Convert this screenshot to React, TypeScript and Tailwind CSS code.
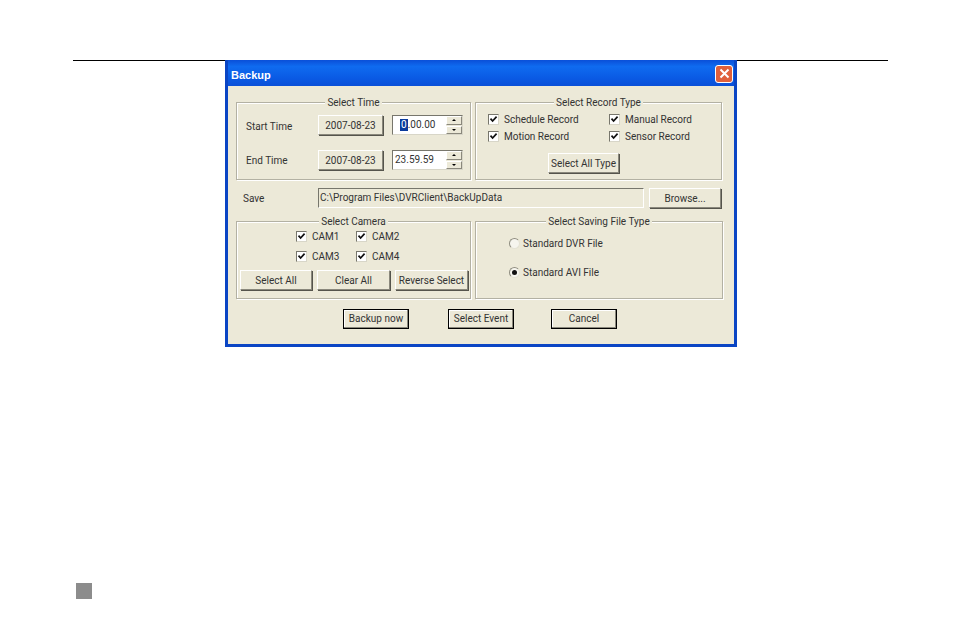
import type { ReactNode } from 'react';

const raised = 'border border-t-white border-l-white border-r-[#8a887c] border-b-[#8a887c] shadow-[1px_1px_0_#55544c] bg-[#ece9d8]';

function Btn({ children, className }: { children: ReactNode; className: string }) {
  return <div className={`flex items-center justify-center h-5 pt-px whitespace-nowrap ${raised} ${className}`}>{children}</div>;
}

function DefaultBtn({ children, className }: { children: ReactNode; className?: string }) {
  return (
    <div className={`flex items-center justify-center h-5 w-[66px] bg-[#ece9d8] border border-black shadow-[inset_-1px_-1px_0_#8a887c,inset_1px_1px_0_#fff] ${className ?? ''}`}>
      {children}
    </div>
  );
}

function Group({ title, className, children }: { title: string; className: string; children: ReactNode }) {
  return (
    <div className={`relative border border-[#b3b1a3] shadow-[inset_1px_1px_0_#fff,1px_1px_0_#fff] ${className}`}>
      <span className="absolute -top-[6px] left-0 right-0 flex justify-center leading-3">
        <span className="bg-[#ece9d8] px-0.5">{title}</span>
      </span>
      {children}
    </div>
  );
}

function Check({ label }: { label: string }) {
  return (
    <div className="flex items-center gap-[5px]">
      <div className="flex items-center justify-center w-[11px] h-[11px] bg-white border border-t-[#77766c] border-l-[#77766c] border-r-[#d8d6c8] border-b-[#d8d6c8]">
        <svg viewBox="0 0 9 9" className="w-[9px] h-[9px]">
          <path d="M1.5 3.6 L3.6 6 L7.6 1.6" fill="none" stroke="#111" strokeWidth="1.7" />
        </svg>
      </div>
      <span className="pt-px">{label}</span>
    </div>
  );
}

function Radio({ label, on }: { label: string; on?: boolean }) {
  return (
    <div className="flex items-center gap-[3px]">
      <div className="flex items-center justify-center w-[11px] h-[11px] rounded-full bg-[#f6f5ee] border border-t-[#8f8d80] border-l-[#8f8d80] border-r-[#e4e2d4] border-b-[#e4e2d4]">
        {on && <div className="w-[5px] h-[5px] rounded-full bg-[#111]" />}
      </div>
      <span className="pt-px">{label}</span>
    </div>
  );
}

function TimeBox({ children, className }: { children: ReactNode; className: string }) {
  return (
    <div className="flex items-center w-[71px] h-5 bg-white border border-t-[#77766c] border-l-[#77766c] border-r-[#d8d6c8] border-b-[#d8d6c8]">
      <div className={`flex-1 flex items-center ${className}`}>{children}</div>
      <div className="flex flex-col bg-[#ece9d8] w-4 h-[18px] gap-px">
        <div className={`flex-1 flex items-center justify-center ${raised} shadow-none`}>
          <div className="border-x-[2px] border-b-[2px] border-x-transparent border-b-black" />
        </div>
        <div className={`flex-1 flex items-center justify-center ${raised} shadow-none`}>
          <div className="border-x-[2px] border-t-[2px] border-x-transparent border-t-black" />
        </div>
      </div>
    </div>
  );
}

export default function App() {
  return (
    <div className="w-[954px] h-[637px] bg-white overflow-hidden text-[10px] leading-3 text-[#333] font-['Roboto',Arial,sans-serif]">
      <div className="ml-[73px] mt-[60px] w-[815px] border-t border-black">
        <div className="ml-[152px] -mt-px w-[512px] h-[287px] flex flex-col bg-[#0a45c4] px-[3px] pb-[3px] relative">
          <div className="h-[26px] flex items-center justify-between pl-[3px] bg-[linear-gradient(to_bottom,#0a4fd8,#0f6bf0_25%,#0a5ae4_70%,#0a50d8)]">
            <span className="text-white font-bold text-[11px] mt-[3px] font-['Liberation_Sans',sans-serif]">Backup</span>
            <div className="w-[18px] h-[18px] mr-px mt-[1px] rounded-[3px] border border-white bg-[#e0603c] flex items-center justify-center">
              <svg viewBox="0 0 11 11" className="w-[11px] h-[11px]">
                <path d="M1.5 1.5 L9.5 9.5 M9.5 1.5 L1.5 9.5" stroke="#fff" strokeWidth="2" />
              </svg>
            </div>
          </div>

          <div className="flex-1 bg-[#ece9d8] pl-[8px] pt-[16px] flex flex-col">
            <div className="flex gap-1 h-[78px]">
              <Group title="Select Time" className="w-[235px] flex flex-col gap-[15px] pt-3 pl-[9px]">
                <div className="flex items-center">
                  <span className="w-[72px] mt-[3px]">Start Time</span>
                  <Btn className="w-[65px] mr-[9px]">2007-08-23</Btn>
                  <TimeBox className="pl-[7px]">
                    <span className="bg-[#0a3a9c] text-white h-3 px-px">0</span>.00.00
                  </TimeBox>
                </div>
                <div className="flex items-center">
                  <span className="w-[72px] mt-px">End Time</span>
                  <Btn className="w-[65px] mr-[9px]">2007-08-23</Btn>
                  <TimeBox className="pl-[2px]">23.59.59</TimeBox>
                </div>
              </Group>
              <Group title="Select Record Type" className="w-[247px] pt-[10px] flex flex-col">
                <div className="grid grid-cols-[121px_auto] gap-y-1 pl-[12px]">
                  <Check label="Schedule Record" />
                  <Check label="Manual Record" />
                  <Check label="Motion Record" />
                  <Check label="Sensor Record" />
                </div>
                <Btn className="w-[71px] mt-[10px] ml-[72px]">Select All Type</Btn>
              </Group>
            </div>

            <div className="flex items-center mt-[8px] pl-[7px] h-5">
              <span className="w-[75px] mt-0.5">Save</span>
              <div className="w-[326px] h-5 flex items-center pl-px border border-t-[#77766c] border-l-[#77766c] border-r-[#fff] border-b-[#fff]">
                C:\Program Files\DVRClient\BackUpData
              </div>
              <Btn className="w-[72px] ml-[5px]">Browse...</Btn>
            </div>

            <div className="flex gap-1 h-[78px] mt-[13px]">
              <Group title="Select Camera" className="w-[235px] flex flex-col pt-[8px]">
                <div className="grid grid-cols-[60px_auto] gap-y-[7px] pl-[59px]">
                  <Check label="CAM1" />
                  <Check label="CAM2" />
                  <Check label="CAM3" />
                  <Check label="CAM4" />
                </div>
                <div className="flex gap-[5px] mt-[7px] pl-[3px]">
                  <Btn className="w-[72px]">Select All</Btn>
                  <Btn className="w-[73px]">Clear All</Btn>
                  <Btn className="w-[73px]">Reverse Select</Btn>
                </div>
              </Group>
              <Group title="Select Saving File Type" className="w-[248px] flex flex-col gap-4 pt-[15px] pl-[33px]">
                <Radio label="Standard DVR File" />
                <Radio label="Standard AVI File" on />
              </Group>
            </div>

            <div className="flex mt-[10px] pl-[107px]">
              <DefaultBtn>Backup now</DefaultBtn>
              <DefaultBtn className="ml-[39px]">Select Event</DefaultBtn>
              <DefaultBtn className="ml-[37px]">Cancel</DefaultBtn>
            </div>
          </div>
        </div>
      </div>
      <div className="ml-[76px] mt-[236px] w-4 h-4 bg-[#8c8c8c]" />
    </div>
  );
}
